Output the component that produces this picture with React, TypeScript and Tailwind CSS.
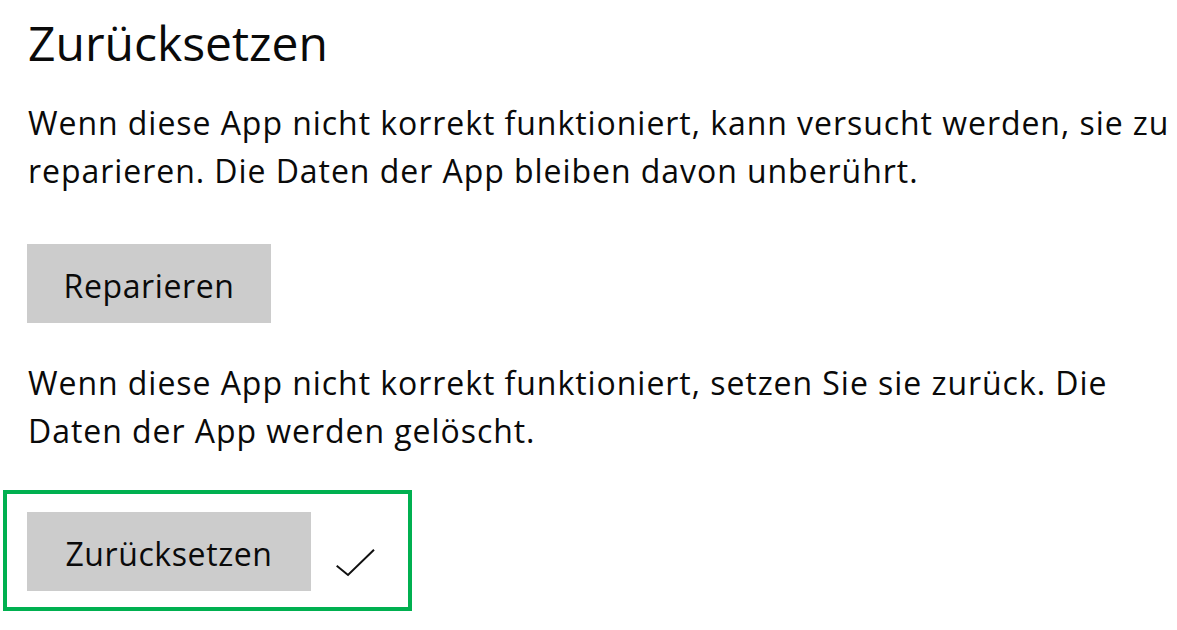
export default function App() {
  const font = { fontFamily: '"Open Sans", "Noto Sans", sans-serif' };
  return (
    <div className="w-[1177px] h-[630px] bg-white text-[#0a0a0a] overflow-hidden" style={font}>
      <div className="pl-[3px] pt-[15px]">
        <div className="ml-[25px] text-[48px] leading-[56px]">Zurücksetzen</div>
        <div className="ml-[25px] mt-[28px] text-[32px] leading-[48px] tracking-[0.95px]">
          <div className="whitespace-nowrap">Wenn diese App nicht korrekt funktioniert, kann versucht werden, sie zu</div>
          <div className="whitespace-nowrap">reparieren. Die Daten der App bleiben davon unberührt.</div>
        </div>
        <button className="ml-[24px] mt-[49px] w-[244px] h-[79px] bg-[#cccccc] text-[32px] tracking-[0.6px] flex items-center justify-center pt-[4px]">
          Reparieren
        </button>
        <div className="ml-[25px] mt-[36px] text-[32px] leading-[48px] tracking-[0.95px]">
          <div className="whitespace-nowrap">Wenn diese App nicht korrekt funktioniert, setzen Sie sie zurück. Die</div>
          <div className="whitespace-nowrap">Daten der App werden gelöscht.</div>
        </div>
        <div className="mt-[35px] w-[409px] h-[121px] border-[4px] border-[#00b050] pl-[20px] pt-[18px] flex items-start">
          <button className="w-[284px] h-[79px] bg-[#cccccc] text-[32px] tracking-[0.6px] flex items-center justify-center pt-[4px]">
            Zurücksetzen
          </button>
          <svg className="ml-[24px] mt-[36px]" width="41" height="29" viewBox="0 0 41 29">
            <path d="M1.7 17.7 L13 27 L39 1.7" fill="none" stroke="#111" strokeWidth="2" />
          </svg>
        </div>
      </div>
    </div>
  );
}
